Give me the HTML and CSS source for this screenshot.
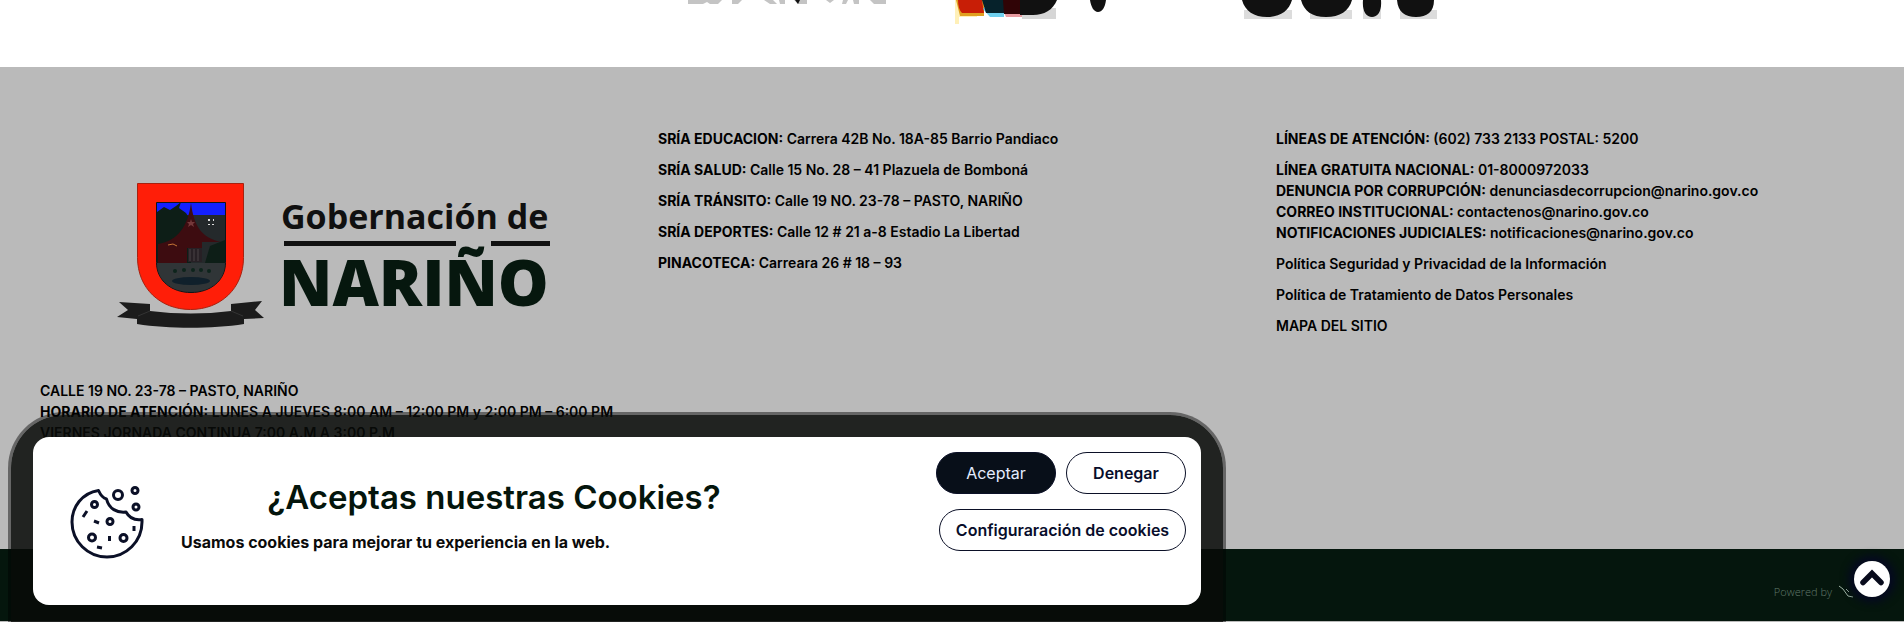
FILE: index.html
```html
<!DOCTYPE html>
<html lang="es">
<head>
<meta charset="utf-8">
<title>Gobernación de Nariño</title>
<link rel="stylesheet" href="styles.css">
</head>
<body>
<section class="partners" aria-label="Entidades">
  <svg class="partners-strip" width="760" height="26" viewBox="680 0 760 26" aria-hidden="true">
    <g fill="#c4c4c4"><path d="M688 0h34l-4 4h-8l-3-2-4 2h-15zM732 0h10l-4 4h-6zM764 0h9l4 4h-7zM779 0h6v4h-5zM794 0h13v4h-9zM826 0h8l-4 3zM843 0h5l-2 4h-4zM853 0h6v4h-5zM870 0h16v4h-12z"/></g>
    <path fill="#111" d="M795 0h5l-2 4z"/>
    <path fill="#fff0b8" d="M955 0h22v17h-18v7h-4z"/>
    <path fill="#e0a020" d="M956 0h28v16h-24z"/>
    <path fill="#6fd0ee" d="M982 8h22v9h-14z"/><path fill="#e89aa0" d="M1003 10h20v7h-17z"/>
    <path fill="#d6d6d6" d="M1022 8h34v11h-34z"/>
    <path fill="#c81e06" d="M958 0h24l2 13h-22q-4-4-4-13z"/>
    <path fill="#06222b" d="M982 0h22v13h-18z"/>
    <path fill="#300406" d="M1003 0h20v14h-19z"/>
    <path fill="#111" d="M1020 0h37c-4 10-13 15-24 15h-13zM1090 0h16c-1 8-4 12-8 12s-7-5-8-12z"/>
    <path fill="#dcdcdc" d="M1244 10h48v9h-48zM1310 10h42v9h-42zM1363 10h18v9h-18zM1400 10h37v9h-37z"/>
    <path fill="#111" d="M1242 0h50c-3 11-12 17-25 17s-22-6-25-17zM1301 0h51c-3 11-12 17-26 17s-22-6-25-17zM1363 0h18c1 11-3 17-9 17s-10-6-9-17zM1397 0h37c0 12-7 17-18 17s-18-5-19-17z"/>
  </svg>
</section>

<footer class="footer">
  <div class="columns">
    <div class="column">
      <svg class="brand" width="440" height="150" viewBox="114 180 440 150" role="img" aria-label="Gobernación de Nariño">
        <path d="M137.500 183.500h106v74c0 31-23 52-53 52s-53-21-53-52z" fill="#ff1e08" stroke="#a8210f"/>
        <path d="M156.500 202.500h69v60c0 18-15 30-34.500 30s-34.500-12-34.500-30z" fill="#24292b" stroke="#101418"/>
        <path d="M157 203h68v12h-68z" fill="#1420ff"/>
        <path d="M157 212l7-5 6 3 6-4 5-4-2 6 7 5 5 8v42h-34z" fill="#0d1e17"/>
        <path d="M210 246l15-6v23h-20z" fill="#0d1e17"/>
        <path d="M191 203c3 25 12 35 30 39h-19v6h-15v15h-29v-19c20-3 30-18 33-41z" fill="#3d0c10"/>
        <path d="M191 219l1 3h3l-2 2 1 3-3-2-3 2 1-3-2-2h3z" fill="#74383a"/>
        <path d="M188 248h14v14h-14z" fill="#272025"/>
        <path d="M190 249v12M194 249v12M198 249v12" stroke="#4b4347"/>
        <path d="M168 245l5-1 4 2" stroke="#c57436" fill="none"/>
        <path d="M208 219h2v2h-2zM213 219h1v2h-1zM208 224h2v1h-2zM212 224h2v1h-2z" fill="#ddd"/>
        <path d="M157 263h68c0 18-15 29-34 29s-34-11-34-29z" fill="#303537"/>
        <g fill="#0d241c"><circle cx="175" cy="271" r="2"/><circle cx="184" cy="270" r="2"/><circle cx="193" cy="270" r="2"/><circle cx="201" cy="270" r="2"/><circle cx="209" cy="271" r="2"/></g>
        <ellipse cx="191" cy="281" rx="19" ry="4" fill="#10202b"/>
        <path fill="#1c1c1c" d="M119 302l31 2v7q41 5 81 0v-7l31-3-7 9 9 8-20 1v5c-32 5-75 5-107 0v-5l-20-2 11-7z"/>
        <path d="M150 311l-12 5M231 311l12 5" stroke="#333"/>
        <text class="brand-small" x="281" y="229">Gobernación de</text>
        <path fill="#101010" d="M284 241h172v5h-172zM491 241h59v5h-59z"/>
        <text class="brand-large" x="279" y="306">NARIÑO</text>
      </svg>
      <p class="address">CALLE 19 NO. 23-78 – PASTO, NARIÑO<br>
        <strong>HORARIO DE ATENCIÓN:</strong> LUNES A JUEVES 8:00 AM – 12:00 PM y 2:00 PM – 6:00 PM<br>
        VIERNES JORNADA CONTINUA 7:00 A.M A 3:00 P.M</p>
    </div>
    <div class="column">
      <p><strong>SRÍA EDUCACION:</strong> Carrera 42B No. 18A-85 Barrio Pandiaco</p>
      <p><strong>SRÍA SALUD:</strong> Calle 15 No. 28 – 41 Plazuela de Bomboná</p>
      <p><strong>SRÍA TRÁNSITO:</strong> Calle 19 NO. 23-78 – PASTO, NARIÑO</p>
      <p><strong>SRÍA DEPORTES:</strong> Calle 12 # 21 a-8 Estadio La Libertad</p>
      <p><strong>PINACOTECA:</strong> Carreara 26 # 18 – 93</p>
    </div>
    <div class="column">
      <p><strong>LÍNEAS DE ATENCIÓN:</strong> (602) 733 2133 POSTAL: 5200</p>
      <p><strong>LÍNEA GRATUITA NACIONAL:</strong> 01-8000972033<br>
        <strong>DENUNCIA POR CORRUPCIÓN:</strong> denunciasdecorrupcion@narino.gov.co<br>
        <strong>CORREO INSTITUCIONAL:</strong> contactenos@narino.gov.co<br>
        <strong>NOTIFICACIONES JUDICIALES:</strong> notificaciones@narino.gov.co</p>
      <p><a href="#">Política Seguridad y Privacidad de la Información</a></p>
      <p><a href="#">Política de Tratamiento de Datos Personales</a></p>
      <p><a href="#">MAPA DEL SITIO</a></p>
    </div>
  </div>
</footer>
<div class="credits">
  <span>Powered by</span>
  <svg width="16" height="16" viewBox="0 0 16 16" aria-hidden="true"><path d="M1 2l4 3 5 7 5 1M8 5l3 3" fill="none" stroke="#9fb5a6"/></svg>
</div>

<div class="cookie-frame">
  <section class="cookie" aria-labelledby="cookie-title">
    <svg class="cookie-icon" width="80" height="80" viewBox="67 482 80 80" aria-hidden="true">
      <g fill="none" stroke="#0b1027" stroke-width="3">
        <path d="M98.500 490.500C82 493 72 507 72 522a35 35 0 0 0 70 0v-2.500c-7 1-13-2-16-7.500-9 1-17-3-19.500-13-4-1-6-4-8-8.500z" stroke-linejoin="round"/>
        <circle cx="118" cy="495" r="4.500"/><circle cx="135" cy="490.500" r="3"/><circle cx="136" cy="507" r="3"/>
        <circle cx="94.500" cy="504.500" r="3"/><circle cx="110" cy="521.500" r="3"/><circle cx="92" cy="537.500" r="3.500"/><circle cx="123.500" cy="538" r="3.500"/>
        <path d="M87 511l-4 6M94 521l5 2M109.500 536v5M134 526v5M97 547l5 1"/>
      </g>
    </svg>
    <div class="cookie-copy">
      <h2 id="cookie-title">¿Aceptas nuestras Cookies?</h2>
      <p>Usamos cookies para mejorar tu experiencia en la web.</p>
    </div>
    <div class="cookie-actions">
      <button class="button button-primary" type="button">Aceptar</button>
      <button class="button" type="button">Denegar</button>
      <button class="button button-wide" type="button">Configuraración de cookies</button>
    </div>
  </section>
</div>

<button class="to-top" type="button" aria-label="Volver arriba">
  <svg width="36" height="36" viewBox="0 0 36 36" aria-hidden="true"><circle cx="18" cy="18" r="18" fill="#fff"/><path d="M9 21.500l9-9 9 9" fill="none" stroke="#080b1c" stroke-width="5.500" stroke-linecap="round"/></svg>
</button>
</body>
</html>
```
FILE: styles.css
```css
* { box-sizing: border-box; }

body {
  margin: 0;
  min-height: 100vh;
  display: flex;
  flex-direction: column;
  background: #bababa;
  color: #000;
  font: 600 14px/21px Inter, "Open Sans", sans-serif;
  overflow: hidden;
}

.partners {
  display: flex;
  justify-content: center;
  padding: 0 0 41px 216px;
  background: #fff;
}
.partners-strip { display: block; }

.footer { padding: 61px 25px 53px; }
.columns { display: grid; grid-template-columns: repeat(3, 1fr); }
.column { padding: 0 15px; min-width: 0; }
.column p { margin: 0 0 10px; white-space: nowrap; }
.column strong { font-weight: 700; }
.column a { color: inherit; text-decoration: none; }
.column .address { margin-bottom: 53px; }

.brand { display: block; margin: 52px auto 50px 74px; }
.brand-small { font: 700 34px "Open Sans", sans-serif; fill: #101010; }
.brand-large { font: 800 64px "Open Sans", sans-serif; fill: #06170e; }

.credits {
  display: flex;
  justify-content: flex-end;
  align-items: center;
  gap: 6px;
  height: 72px;
  padding: 14px 50px 0 0;
  background: #05160d;
  color: #60796a;
  font: 300 11px/16px "Open Sans", sans-serif;
}

.cookie-frame {
  position: fixed;
  left: 8px;
  bottom: 0;
  width: min(1218px, calc(100% - 16px));
  padding: 22px 22px 17px;
  border: 3px solid rgba(0, 0, 0, 0.45);
  border-bottom: 0;
  border-radius: 56px 56px 0 0;
  background: rgba(8, 10, 8, 0.86) padding-box;
}
.cookie {
  display: flex;
  align-items: flex-start;
  min-height: 168px;
  padding: 15px 15px 15px 34px;
  border-radius: 16px;
  background: #fff;
}
.cookie-icon { flex: none; margin-top: 30px; }
.cookie-copy { flex: 1; padding: 24px 0 0 34px; }
.cookie-copy h2 {
  width: 626px;
  margin: 0 0 14px;
  color: #04150c;
  font: 600 33px/42px Inter, sans-serif;
  text-align: center;
}
.cookie-copy p { margin: 0; color: #0b0b0b; font: 700 16px/20px Inter, sans-serif; }

.cookie-actions {
  display: flex;
  flex-wrap: wrap;
  justify-content: flex-end;
  gap: 15px 10px;
  width: 252px;
}
.button {
  width: 120px;
  height: 42px;
  padding: 0;
  border: 1px solid #0b1027;
  border-radius: 21px;
  background: #fff;
  color: #080d2b;
  font: 600 16px/24px Inter, sans-serif;
}
.button-primary { background: #080f19; color: #e4ecff; font-weight: 400; }
.button-wide { width: 247px; }

.to-top {
  position: fixed;
  right: 14px;
  bottom: 25px;
  width: 36px;
  height: 36px;
  padding: 0;
  border: 0;
  border-radius: 18px;
  background: none;
  box-shadow: 0 0 8px 5px #050822;
}
.to-top svg { display: block; }
```
